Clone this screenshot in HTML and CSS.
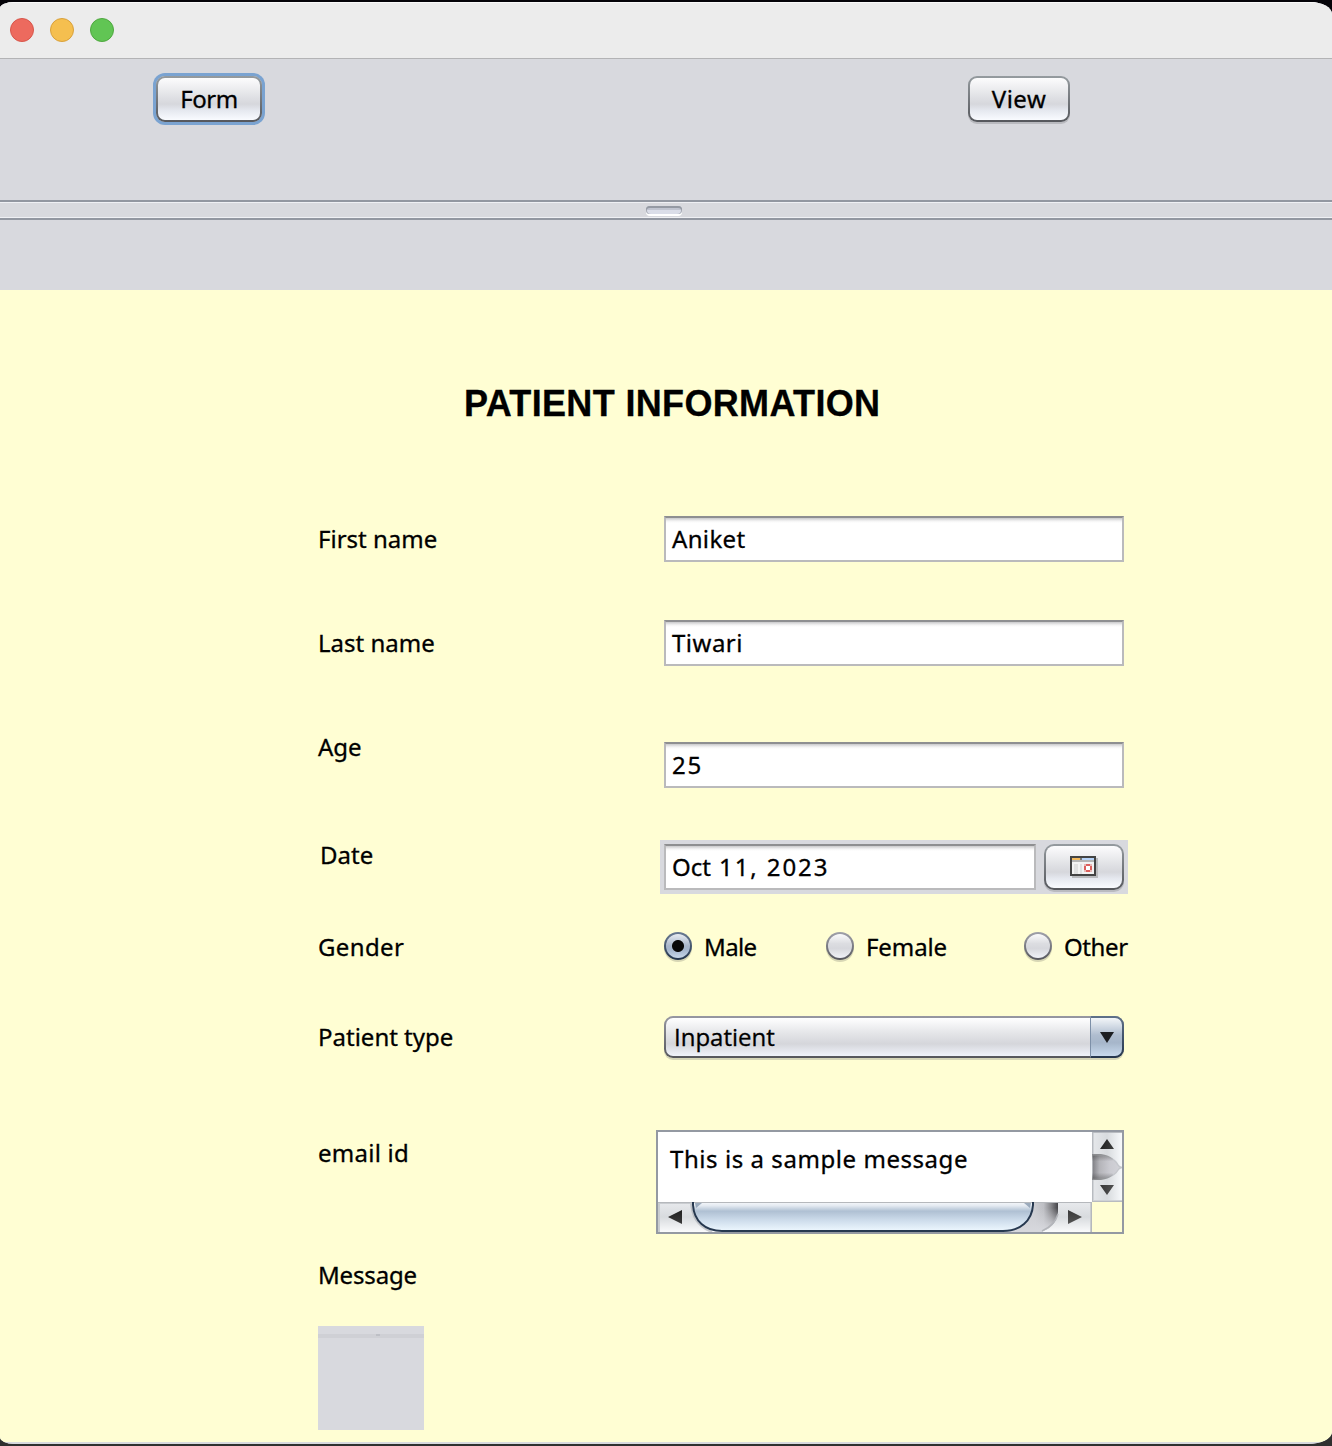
FILE: index.html
```html
<!DOCTYPE html>
<html lang="en">
<head>
<meta charset="utf-8">
<title>Patient Information</title>
<link rel="stylesheet" href="styles.css">
</head>
<body>
<div class="window">
  <header class="titlebar">
    <span class="light red"></span><span class="light yellow"></span><span class="light green"></span>
  </header>
  <nav class="toolbar">
    <button class="btn form focused"><span class="t-form">Form</span></button>
    <button class="btn view"><span class="t-view">View</span></button>
  </nav>
  <div class="divider"><span class="grip"></span></div>
  <div class="strip"></div>
  <main class="panel">
    <h1>PATIENT INFORMATION</h1>
    <div class="row first"><label>First name</label><div class="field"><span class="t-aniket">Aniket</span></div></div>
    <div class="row last"><label>Last name</label><div class="field"><span class="t-tiwari">Tiwari</span></div></div>
    <div class="row age"><label>Age</label><div class="field"><span class="t-25">25</span></div></div>
    <div class="row date"><label>Date</label>
      <div class="datebox">
        <div class="field">Oct<span class="t-oct"> 11, 2023</span></div>
        <button class="btn pick" aria-label="Pick date">
          <svg width="28" height="22" viewBox="0 0 28 22" shape-rendering="crispEdges">
            <path fill="#b9babd" d="M2 2h26v20H2z"/>
            <path fill="#434343" d="M0 0h26v20H0z"/>
            <path fill="#f2f2f2" d="M2 2h22v16H2z"/>
            <path fill="#f2b95c" d="M2 2h8v2H2z"/><path fill="#777" d="M10 2h2v2h-2z"/><path fill="#b5d2f8" d="M12 2h12v2H12z"/>
            <path fill="#b5b5b5" d="M2 4h22v2H2z"/>
            <path fill="#e0e0e0" d="M4 8h2v10H4zM6 8h2v10H6zM10 8h2v10h-2z"/>
            <path fill="#e9b8b5" d="M14 8h8v8h-8z"/>
            <path fill="#dc605d" d="M16 8h4v2h-4zM14 10h2v4h-2zM20 10h2v4h-2zM16 14h4v2h-4z"/>
            <path fill="#fff" d="M16 10h4v4h-4z"/>
          </svg>
        </button>
      </div>
    </div>
    <div class="row gender"><label class="t-gender">Gender</label>
      <div class="radios">
        <div class="radio male"><span class="dot on"></span><span class="t-male">Male</span></div>
        <div class="radio female"><span class="dot"></span><span class="t-female">Female</span></div>
        <div class="radio other"><span class="dot"></span><span class="t-other">Other</span></div>
      </div>
    </div>
    <div class="row type"><label>Patient type</label>
      <div class="combo"><div class="value"><span class="t-inpatient">Inpatient</span></div>
        <div class="arrow"><svg width="14" height="11" viewBox="0 0 14 11"><path fill="#1c1e22" d="M0 0h14L7 11z"/></svg></div>
      </div>
    </div>
    <div class="row email"><label class="t-email">email id</label>
      <div class="scroll">
        <div class="text"><span class="t-sample">This is a sample message</span></div>
        <svg class="vbar" width="30" height="70" viewBox="0 0 30 70">
          <defs>
            <linearGradient id="v" x1="0" x2="1"><stop offset="0" stop-color="#e6e8eb"/><stop offset=".5" stop-color="#d8dbde"/><stop offset="1" stop-color="#f7f9fb"/></linearGradient>
            <linearGradient id="vt" x1="0" x2="1"><stop offset="0" stop-color="#7c7c81"/><stop offset=".25" stop-color="#b4b4b9"/><stop offset=".6" stop-color="#cbcbd1"/><stop offset="1" stop-color="#d4d5da"/></linearGradient>
            <linearGradient id="vd" x1="0" y1="0" x2="0" y2="1"><stop offset="0" stop-color="#333" stop-opacity=".65"/><stop offset=".28" stop-color="#333" stop-opacity="0"/><stop offset=".72" stop-color="#333" stop-opacity="0"/><stop offset="1" stop-color="#333" stop-opacity=".65"/></linearGradient>
            <linearGradient id="ar" x1="0" x2="1" y2="1"><stop offset="0" stop-color="#1e1e1e"/><stop offset="1" stop-color="#555"/></linearGradient>
          </defs>
          <path fill="url(#v)" d="M0 0h30v70H0z"/>
          <path fill="#b8bbc0" d="M0 0h1v70H0zM0 0h30v1H0zM0 69h30v1H0z"/>
          <path fill="#cfd2d6" d="M1 1h1v68H1zM1 68h29v1H1z"/>
          <path fill="url(#vt)" stroke="#c5c7cc" stroke-width="1.5" d="M0 22.5C13 22.5 22 25 26 33Q27 35 30 35.500Q27 36 26 38C22 45 13 47.500 0 47.500z"/>
          <path fill="url(#vd)" d="M0 22h9q8 1 12 5L18 35l3 8q-4 4-12 5H0z" opacity=".65"/>
          <path fill="url(#ar)" d="M8 17l7-10 7 10zM8 53h14l-7 10z"/>
        </svg>
        <svg class="hbar" width="434" height="30" viewBox="0 0 434 30">
          <defs>
            <linearGradient id="h" x1="0" y1="0" x2="0" y2="1"><stop offset="0" stop-color="#e8eaed"/><stop offset=".5" stop-color="#d8dbde"/><stop offset="1" stop-color="#fafbfc"/></linearGradient>
            <linearGradient id="th" x1="0" y1="0" x2="0" y2="1"><stop offset="0" stop-color="#fff"/><stop offset=".18" stop-color="#e5ebf2"/><stop offset=".36" stop-color="#afc0d3"/><stop offset=".65" stop-color="#cddceb"/><stop offset="1" stop-color="#eef8ff"/></linearGradient>
            <linearGradient id="tr" gradientUnits="userSpaceOnUse" x1="376" x2="400" y1="0" y2="0"><stop offset="0" stop-color="#cdced3"/><stop offset=".4" stop-color="#bebfc4"/><stop offset=".7" stop-color="#88888c"/><stop offset="1" stop-color="#444448"/></linearGradient>
            <linearGradient id="trf" x1="0" y1="0" x2="0" y2="1"><stop offset=".2" stop-color="#d4d5da" stop-opacity="0"/><stop offset=".9" stop-color="#d6d7dc"/></linearGradient>
          </defs>
          <path fill="url(#h)" d="M0 0h434v30H0z"/>
          <path fill="url(#tr)" d="M360 0H400V10Q398 25 383 30H340z"/>
          <path fill="url(#trf)" d="M360 0H400V10Q398 25 383 30H340z"/>
          <path fill="none" stroke="#b3b5ba" stroke-width="1.500" d="M400 12Q397 23 384 29"/>
          <path fill="none" stroke="#a8acb2" stroke-width="2" opacity=".6" d="M33 0Q34 23 54 30"/>
          <path fill="#b5b8bc" d="M0 0h434v1H0zM433 0h1v30h-1z"/>
          <path fill="#c9ccd0" d="M0 1h2v29H0zM0 1h35v1H0zM432 1h1v29h-1z"/>
          <path fill="url(#th)" stroke="#26384f" stroke-width="2" d="M35 -2V3C36 19 47 29 64 29H345C362 29 374 19 375 3V-2"/>
          <path fill="#b5b8bc" d="M36 0h338v1H36z"/>
          <path fill="#70859e" opacity=".65" d="M37 1h7l-6 5zM373 1h-7l6 5z"/>
          <path fill="url(#ar)" d="M10 15l14-7v14zM410 8l14 7-14 7z"/>
        </svg>
      </div>
    </div>
    <div class="row msg"><label class="t-msg">Message</label></div>
    <div class="mini"><span class="miniline"><span class="minigrip"></span></span></div>
  </main>
</div>
</body>
</html>
```
FILE: styles.css
```css
* { box-sizing: border-box; }
body { margin: 0; height: 1446px; padding: 2px 0; background: #08080c linear-gradient(#050409 50%, #30302f 100%); font: 24px/46px "Noto Sans", sans-serif; color: #000; -webkit-text-stroke: 0.3px #000; overflow: hidden; }
svg { display: block; }
span { white-space: nowrap; }
.window { height: 1442px; display: flex; flex-direction: column; background: #d8d9de; overflow: hidden; border-radius: 14px 22px 24px 14px / 6px 12px 12px 7px; }
.titlebar { height: 57px; flex: none; display: flex; gap: 16px; padding: 16px 10px; background: #ececec; border-top: 1px solid #fafafa; border-bottom: 1px solid #b3b3b5; }
.light { width: 24px; height: 24px; margin-top: -1px; border-radius: 50%; border: 1px solid; }
.red { background: #ed6a5e; border-color: #d8564b; }
.yellow { background: #f5bf4f; border-color: #d9a13b; }
.green { background: #61c554; border-color: #4fa83f; }
.toolbar { height: 141px; flex: none; display: flex; align-items: flex-start; padding: 17px 0 0 156px; }
.btn { font: inherit; color: inherit; height: 46px; padding: 0; display: flex; align-items: center; justify-content: center; border: 2px solid transparent; border-radius: 9px; background: linear-gradient(#fcfcfd, #e6e7ea 35%, #d6d7dc 62%, #e6e9f0 78%, #f9fbff) padding-box, linear-gradient(#959b9f, #55575c) border-box; box-shadow: 0 2px 0 #b9babf; }
.form { width: 106px; }
.focused { box-shadow: 0 0 0 3px #7aa3d1; }
.view { width: 102px; margin-left: 706px; }
.divider { height: 20px; flex: none; display: flex; justify-content: center; align-items: center; border-top: 2px solid #9297a1; border-bottom: 2px solid #9297a1; box-shadow: inset 0 1px #eff0f4, inset 0 -1px #eff0f4; }
.grip { width: 36px; height: 8px; margin: -1px 0 0 -4px; border-radius: 4px; background: linear-gradient(#c0c4d0 50%, #dbdee9 50%); box-shadow: inset 0 2px #9499a3, inset 1px 0 #a9adb6, inset -1px 0 #a9adb6, 0 2px #fff; }
.strip { height: 70px; flex: none; }
.panel { flex: none; height: 1152px; background: #fffed3; display: flex; flex-direction: column; padding: 92px 0 0 318px; }
h1 { margin: 0 0 0 146px; height: 44px; font: bold 36px/44px "Liberation Sans", Arial, sans-serif; letter-spacing: 0.34px; white-space: nowrap; }
.row { display: flex; align-items: flex-start; flex: none; }
label { width: 346px; flex: none; height: 46px; white-space: nowrap; }
.field { width: 460px; height: 46px; border: 2px solid #bababc; border-top-color: #8e8f91; background: #fff linear-gradient(#c9c9cb, #f4f4f4 3px, #fff 5px); padding-left: 6px; line-height: 42px; }
.first { margin-top: 90px; }
.last, .age { margin-top: 58px; }
.age .field { margin-top: 18px; }
.date { margin-top: 44px; }
.date label { padding-left: 2px; width: 342px; }
.datebox { display: flex; gap: 8px; width: 468px; height: 54px; margin-top: 8px; padding: 4px; background: #d8d9de; }
.datebox .field { width: 372px; }
.pick { width: 80px; border-radius: 10px; }
.pick svg { margin-top: -1px; }
.gender { margin-top: 30px; }
.radios { display: flex; width: 470px; }
.radio { display: flex; align-items: flex-start; gap: 12px; height: 46px; }
.male { width: 162px; }
.female { width: 198px; }
.dot { width: 28px; height: 28px; margin-top: 8px; border-radius: 50%; border: 2px solid transparent; background: linear-gradient(#fafafb, #dcdde1 40%, #d6d7dc 60%, #f0f2f8) padding-box, linear-gradient(#a0a1aa, #55565d) border-box; box-shadow: 0 2px 0 rgba(100,100,90,.25); }
.on { background: radial-gradient(circle at 50% 50%, #090909 0 5.5px, transparent 6.5px), linear-gradient(#f2f5f9, #a8b6ca 50%, #a6b7ce 65%, #d0e0f0) padding-box, linear-gradient(#6a7b93, #22344b) border-box; background-origin: border-box; }
.type { margin-top: 44px; }
.combo { display: flex; width: 460px; height: 42px; margin-top: 2px; border: 2px solid transparent; border-radius: 9px; background: linear-gradient(#fff, #e4e5e8 40%, #d5d6db 68%, #f0f3fb) padding-box, linear-gradient(#9798a2, #55565c) border-box; box-shadow: 0 2px 0 #d6d6b8; }
.value { flex: 1; padding-left: 8px; line-height: 38px; }
.arrow { width: 34px; height: 42px; margin: -2px -2px 0 0; display: flex; align-items: center; justify-content: center; border: 2px solid transparent; border-left: 1px solid #7d90a8; border-radius: 0 9px 9px 0; background: linear-gradient(#f3f6f9, #afbdcf 45%, #a6b6ca 65%, #c8daed) padding-box, linear-gradient(#5f7189, #25364d) border-box; }
.email { margin-top: 70px; }
.scroll { display: grid; grid-template: 70px 30px / 434px 30px; width: 468px; height: 104px; margin-left: -8px; border: 2px solid #9499a2; }
.text { background: #fff; padding-left: 12px; line-height: 54px; }
.msg { margin-top: 18px; }
.mini { flex: none; width: 106px; height: 104px; margin-top: 28px; padding-top: 8px; background: #d8d9de; }
.miniline { display: flex; justify-content: center; height: 4px; background: #cfd0d5; }
.minigrip { width: 4px; height: 2px; margin-left: 14px; background: #bec0c6; }
.window::after { content: ""; height: 2px; flex: none; background: #d8d9de; }

/* Tracking per label */
.t-form { letter-spacing: -0.5px; }
.t-view { letter-spacing: 0.5px; }
.t-aniket { letter-spacing: 0.35px; }
.t-tiwari { letter-spacing: 0.5px; }
.t-25 { letter-spacing: 1.8px; }
.t-oct { letter-spacing: 1.9px; }
.t-gender { letter-spacing: 0.35px; }
.t-male { letter-spacing: -0.6px; }
.t-female { letter-spacing: -0.1px; }
.t-other { letter-spacing: -0.4px; }
.t-inpatient { font-family: "Open Sans", "Noto Sans", sans-serif; letter-spacing: 0; }
.t-email { letter-spacing: 0.25px; }
.t-sample { letter-spacing: 0.56px; }
.t-msg { letter-spacing: -0.15px; }
```
